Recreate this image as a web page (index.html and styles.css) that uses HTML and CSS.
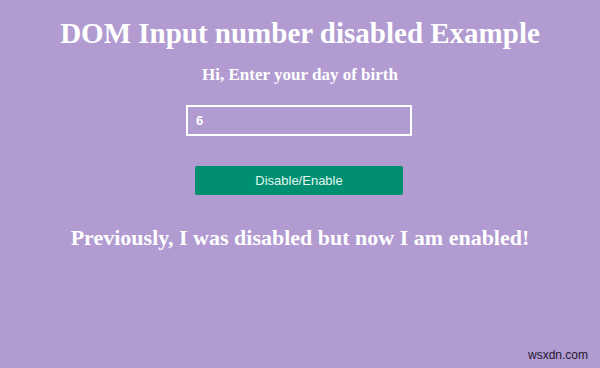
FILE: index.html
```html
<!DOCTYPE html>
<html lang="en">
<head>
<meta charset="UTF-8">
<meta name="viewport" content="width=device-width, initial-scale=1.0">
<title>DOM Input number disabled Example</title>
<link rel="stylesheet" href="styles.css">
</head>
<body>
<div class="page">
    <h1 class="title">DOM Input number disabled Example</h1>
    <p class="prompt">Hi, Enter your day of birth</p>
    <input class="dayInput" type="text" value="6">
    <button class="toggleBtn">Disable/Enable</button>
    <p class="status">Previously, I was disabled but now I am enabled!</p>
</div>
<div class="watermark">wsxdn.com</div>
</body>
</html>
```

FILE: styles.css
```css
body {
    margin: 0;
    height: 368px;
    background-color: #b19bd1;
    font-family: "Liberation Serif", "Times New Roman", serif;
    color: #fff;
    overflow: hidden;
    position: relative;
}

.page {
    display: flex;
    flex-direction: column;
    align-items: center;
    padding-top: 16px;
}

.title {
    margin: 0;
    font-size: 29px;
    line-height: 34px;
}

.prompt {
    margin: 15px 0 0;
    font-size: 17px;
    font-weight: bold;
    line-height: 20px;
}

.dayInput {
    margin: 20px 2px 0 0;
    width: 226px;
    height: 31px;
    box-sizing: border-box;
    background: transparent;
    border: 2px solid #fff;
    color: #fff;
    font-family: "Liberation Sans", Arial, sans-serif;
    font-size: 13px;
    font-weight: bold;
    padding: 0 8px;
    outline: none;
}

.toggleBtn {
    margin: 30px 2px 0 0;
    width: 208px;
    height: 29px;
    background-color: #008f70;
    border: none;
    border-radius: 2px;
    color: #e4f7f0;
    font-family: "Liberation Sans", Arial, sans-serif;
    font-size: 13px;
}

.status {
    margin: 30px 0 0;
    font-size: 22px;
    font-weight: bold;
    line-height: 26px;
}

/* site watermark in the corner */
.watermark {
    position: absolute;
    right: 12px;
    bottom: 6px;
    color: #1e1a2e;
    font-family: "Liberation Sans", Arial, sans-serif;
    font-size: 12px;
}
```
